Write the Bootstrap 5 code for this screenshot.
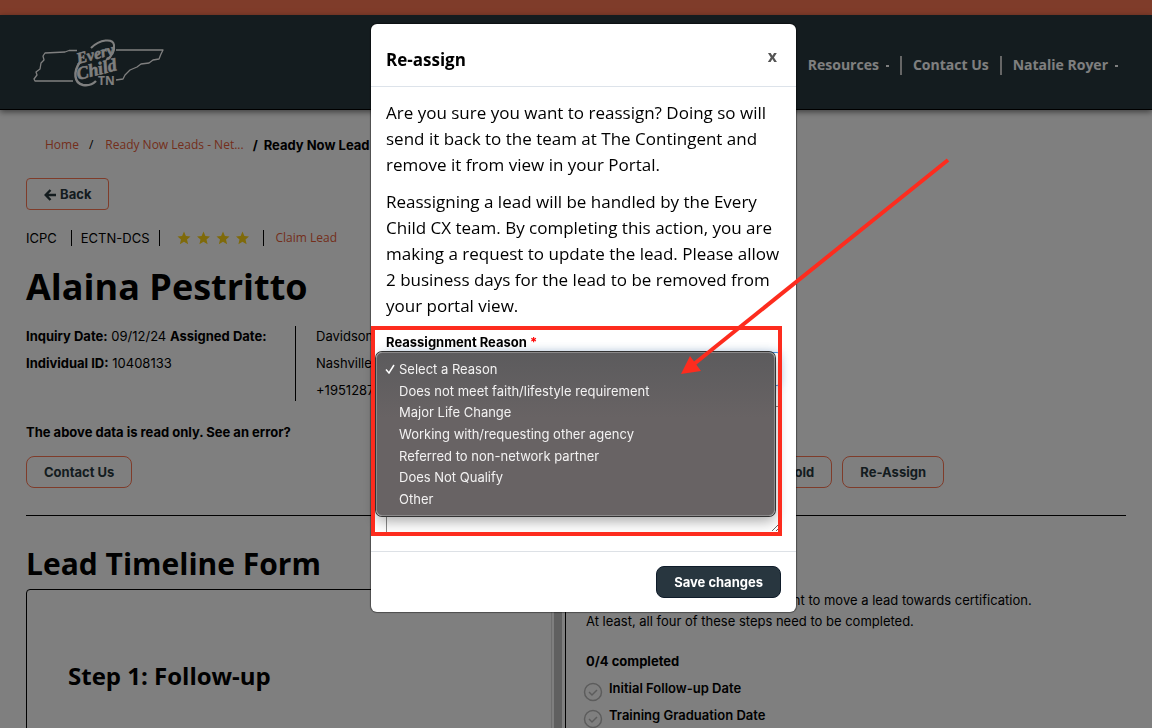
<!DOCTYPE html>
<html lang="en">
<head>
<meta charset="utf-8">
<meta name="viewport" content="width=device-width, initial-scale=1">
<title>Every Child TN - Lead</title>
<link href="https://cdn.jsdelivr.net/npm/bootstrap@5.3.0/dist/css/bootstrap.min.css" rel="stylesheet">
<style>
:root { --coral:#ff7854; --navy:#28363f; --mark:#fd2c1e; }
body { font-family:Inter,"Liberation Sans",sans-serif; font-size:13px; line-height:20px; color:#000; height:100vh; overflow:hidden; }
a { color:#e85c38; text-decoration:none; }
h1,h2,h3,.humanist { font-family:"Open Sans","Noto Sans",sans-serif; }
h1,h2,h3 { font-weight:700; margin:0; }
h1 { font-size:36px; line-height:48px; }
h2 { font-size:30px; line-height:40px; }
h3 { font-size:24px; line-height:32px; }
b { font-weight:700; }
.topband { height:15px; background:var(--coral); }
.mainbar { height:95px; padding:0 34px 0 32px; background:#28383e; border-bottom:1px solid #000; box-shadow:0 2px 6px rgba(0,0,0,.5); }
.mainbar .links { gap:11px; padding-top:6px; }
.mainbar .nav-link { color:#fff; font-weight:700; font-size:14px; line-height:20px; padding:0; }
.mainbar .bar { width:2px; height:19px; background:#ccc; }
.caret { display:inline-block; width:3px; height:2px; margin-left:7px; vertical-align:middle; background:#fff; }
.page { padding:25px 26px 0; min-height:0; overflow:hidden; }
.crumbs { padding-left:19px; height:20px; font-size:12px; }
.crumbs .slash { margin:0 12px 0 10px; }
.crumbs .last { font-family:Inter,sans-serif; font-size:13px; margin-left:9px; }
.crumbs .last span { margin-right:6px; }
.btn-line { --bs-btn-font-size:13px; --bs-btn-font-weight:700; --bs-btn-line-height:20px; --bs-btn-padding-y:5px; --bs-btn-padding-x:17px; --bs-btn-border-radius:8px; --bs-btn-color:#28383e; --bs-btn-border-color:var(--coral); }
.btn-back { --bs-btn-border-radius:4px; margin-top:23px; }
.btn-back svg { margin-right:1px; }
.tags { margin-top:18px; }
.tags .vline { margin:0 9px; }
.tags .vline.wide { margin-left:14px; }
.tags .claim { font-size:12px; margin-left:4px; }
.vline { width:1px; height:16px; background:#000; }
h1 { margin-top:15px; }
.facts { line-height:27px; margin-top:15px; }
.facts .who { width:270px; border-right:1px solid #000; height:75px; }
.facts .lines { margin-top:-3px; }
.notice { margin:18px 0 14px; }
.rule { border-top:1px solid #000; opacity:1; margin:27px 0 28px; }
.stepbox { width:540px; height:400px; margin-top:5px; border:1px solid #000; border-radius:4px 0 0 0; }
.stepbox .inner { padding:70px 41px; }
.stepbox .track { width:14px; border-left:1px solid #ddd; padding:0 2px; }
.stepbox .thumb { width:8px; background:#c0c0c0; height:100%; }
.hold-actions { gap:10px; padding-right:182px; }
.todo { line-height:21px; margin-left:20px; padding-top:46px; }
.todo .done { margin:19px 0 6px; }
.todo .item { height:27px; gap:6px; font-weight:600; }
.todo .item svg { margin:4px 0 0 -3px; }
.modal-backdrop { --bs-backdrop-opacity:.5; }
.modal { padding-left:15px; overflow:hidden; }
.modal-dialog { max-width:425px; margin-top:24px; }
.modal-content { border:0; border-radius:6px; color:#000; box-shadow:0 0 1px 1px rgba(0,0,0,.4); }
.modal-header { padding:14px 15px 0; height:63px; align-items:flex-start; border-color:#dde3ea; }
.modal-title { font-size:17px; line-height:24px; font-weight:700; margin-top:10px; }
.modal-header .shut { border:0; background:none; padding:0 4px; font-weight:700; font-size:16px; line-height:36px; color:#555; }
.modal-body { padding:13px 15px 18px; }
.modal-body p { font-size:17px; line-height:26px; margin-bottom:11px; }
.reason { margin-top:13px; }
.reason label { line-height:20px; height:20px; font-weight:700; display:block; }
.reason label span { color:#f00; }
.reason .form-select { height:34px; font-size:13px; border-color:#4a90d9; box-shadow:0 0 10px rgba(80,150,220,.35); border-radius:4px; }
.reason textarea { height:127px; margin-top:20px; border:1px solid #888; border-radius:0; font-size:13px; }
.frame { position:absolute; left:-15px; top:-6px; right:-1px; bottom:-3px; border:4px solid var(--mark); z-index:3; pointer-events:none; }
.arrow { position:absolute; left:290px; top:-180px; z-index:4; pointer-events:none; }
.options { position:absolute; left:-10px; right:6px; top:20px; height:164px; padding:5px; border:1px solid #8b898a; border-radius:6px; display:grid; grid-auto-rows:1fr; background:linear-gradient(#5c5b5d,#686364 40%); box-shadow:0 0 0 1px #333,0 5px 14px rgba(0,0,0,.35); z-index:2; margin:0; }
.options button { border:0; background:none; padding:0 0 0 17px; color:#f3f2f2; text-align:left; line-height:20px; position:relative; }
.options svg { position:absolute; left:3px; top:6px; }
.modal-footer { padding:14px 15px; border-color:#dde1e6; }
.modal-footer>* { margin:0; }
.btn-save { --bs-btn-color:#fff; --bs-btn-bg:#28363f; --bs-btn-border-color:#0f1c2a; }
</style>
</head>
<body class="d-flex flex-column">
<header>
  <div class="topband"></div>
  <nav class="mainbar d-flex align-items-center justify-content-between humanist">
    <a href="#" aria-label="Every Child TN"><svg width="134" height="52" viewBox="0 0 134 52" fill="none" stroke="#fff" stroke-width="1.3" stroke-linejoin="round">
      <path d="M45 14.5H37L33 16 13 17 11 20 12 24 9 27 8 33 4 36 5 39 2 43 3 45H41"/>
      <path d="M84 14H131L129 18 127 23 121 24 117 27 109 28 105 31 98 34 93 39 91 43 84 44"/>
      <path d="M59 12C68 3 81 2 82 9C83 16 79 21 74 24" stroke-width="2"/>
      <path d="M48 26C41 36 42 47 51 49C57 50 61 48 64 45" stroke-width="2.4"/>
      <g fill="#fff" stroke="#fff" stroke-width=".5" font-family="Liberation Serif,serif" font-weight="700" font-style="italic">
      <text x="46" y="28" font-size="16" transform="rotate(-15 46 28)">Every</text>
      <text x="46" y="44" font-size="18" transform="rotate(-14 46 44)">Child</text>
      <text x="66" y="49" font-size="12" stroke="none" font-style="normal" font-family="Open Sans,sans-serif">TN</text></g>
    </svg></a>
    <div class="links d-flex align-items-center">
      <a class="nav-link" href="#">Resources<span class="caret"></span></a>
      <span class="bar"></span>
      <a class="nav-link" href="#">Contact Us</a>
      <span class="bar"></span>
      <a class="nav-link" href="#">Natalie Royer<span class="caret"></span></a>
    </div>
  </nav>
</header>
<main class="page flex-grow-1">
  <nav class="crumbs d-flex humanist" aria-label="breadcrumb">
    <a href="#">Home</a><span class="slash">/</span><a href="#">Ready Now Leads - Net...</a><b class="last"><span>/</span>Ready Now Lead</b>
  </nav>
  <button class="btn btn-line btn-back" type="button"><svg width="12" height="12" viewBox="0 0 12 12" fill="none" stroke="currentColor" stroke-width="2.4"><path d="M6.5 1 1.7 6l4.8 5M2 6h10"/></svg> Back</button>
  <div class="tags d-flex align-items-center">
    <span>ICPC</span><span class="vline wide"></span><span>ECTN-DCS</span><span class="vline"></span>
    <svg class="mx-2" width="74" height="14" viewBox="0 0 74 14" fill="#ffd414"><defs><path id="star" d="M7 0.5 8.9 5l4.6.4-3.5 3.1 1.1 4.8L7 10.8l-4.1 2.500L4 8.500.5 5.4 5.100 5z"/></defs><use href="#star"/><use href="#star" x="19.500"/><use href="#star" x="39"/><use href="#star" x="58.500"/></svg>
    <span class="vline mx-1 me-2"></span><a class="humanist claim" href="#">Claim Lead</a>
  </div>
  <h1>Alaina Pestritto</h1>
  <div class="facts d-flex">
    <div class="who"><div class="lines"><b>Inquiry Date:</b> 09/12/24 <b>Assigned Date:</b><br><b>Individual ID:</b> 10408133</div></div>
    <div class="lines ps-3 ms-1">Davidson<br>Nashville<br>+1951287</div>
  </div>
  <p class="notice"><b>The above data is read only. See an error?</b></p>
  <div class="d-flex">
    <button class="btn btn-line" type="button">Contact Us</button>
    <div class="hold-actions d-flex ms-auto">
      <button class="btn btn-line" type="button">On Hold</button>
      <button class="btn btn-line" type="button">Re-Assign</button>
    </div>
  </div>
  <hr class="rule">
  <div class="d-flex align-items-start">
    <div>
      <h2>Lead Timeline Form</h2>
      <div class="stepbox d-flex justify-content-between">
        <div class="inner"><h3>Step 1: Follow-up</h3></div>
        <div class="track"><div class="thumb"></div></div>
      </div>
    </div>
    <div class="todo">
      These steps below are all important to move a lead towards certification.<br>At least, all four of these steps need to be completed.
      <div class="done"><b>0/4 completed</b></div>
      <div class="item d-flex"><svg width="20" height="20" viewBox="0 0 20 20" fill="none" stroke="#b8b8b8" stroke-width="1.500"><circle cx="10" cy="10" r="8.500"/><path d="m6 10 3 3 5-5"/></svg><span>Initial Follow-up Date</span></div>
      <div class="item d-flex"><svg width="20" height="20" viewBox="0 0 20 20" fill="none" stroke="#b8b8b8" stroke-width="1.500"><circle cx="10" cy="10" r="8.500"/><path d="m6 10 3 3 5-5"/></svg><span>Training Graduation Date</span></div>
    </div>
  </div>
</main>
<div class="modal-backdrop show"></div>
<div class="modal d-block" role="dialog" aria-labelledby="reassignTitle">
  <div class="modal-dialog">
    <div class="modal-content">
      <div class="modal-header justify-content-between humanist">
        <div class="modal-title" id="reassignTitle">Re-assign</div>
        <button class="shut" type="button" aria-label="Close">x</button>
      </div>
      <div class="modal-body">
        <div class="humanist">
          <p>Are you sure you want to reassign? Doing so will send it back to the team at The Contingent and remove it from view in your Portal.</p>
          <p class="mb-0">Reassigning a lead will be handled by the Every Child CX team. By completing this action, you are making a request to update the lead. Please allow 2 business days for the lead to be removed from your portal view.</p>
        </div>
        <div class="reason position-relative">
          <label for="reason">Reassignment Reason <span>*</span></label>
          <select class="form-select" id="reason"><option></option></select>
          <textarea class="form-control" aria-label="Notes"></textarea>
          <div class="options" role="listbox">
            <button type="button"><svg width="10" height="10" viewBox="0 0 10 10" fill="none" stroke="#fff" stroke-width="1.500"><path d="m1 5.500 3 3.500 5-8"/></svg>Select a Reason</button>
            <button type="button">Does not meet faith/lifestyle requirement</button>
            <button type="button">Major Life Change</button>
            <button type="button">Working with/requesting other agency</button>
            <button type="button">Referred to non-network partner</button>
            <button type="button">Does Not Qualify</button>
            <button type="button">Other</button>
          </div>
          <div class="frame"></div>
          <svg class="arrow" width="280" height="230" viewBox="0 0 280 230"><path d="M272 8 18 212" stroke="#fd2c1e" stroke-width="4"/><path d="m5 222 9-18 11 15z" fill="#fd2c1e"/></svg>
        </div>
      </div>
      <div class="modal-footer"><button class="btn btn-line btn-save" type="button">Save changes</button></div>
    </div>
  </div>
</div>
<script src="https://cdn.jsdelivr.net/npm/bootstrap@5.3.0/dist/js/bootstrap.bundle.min.js"></script>
</body>
</html>
